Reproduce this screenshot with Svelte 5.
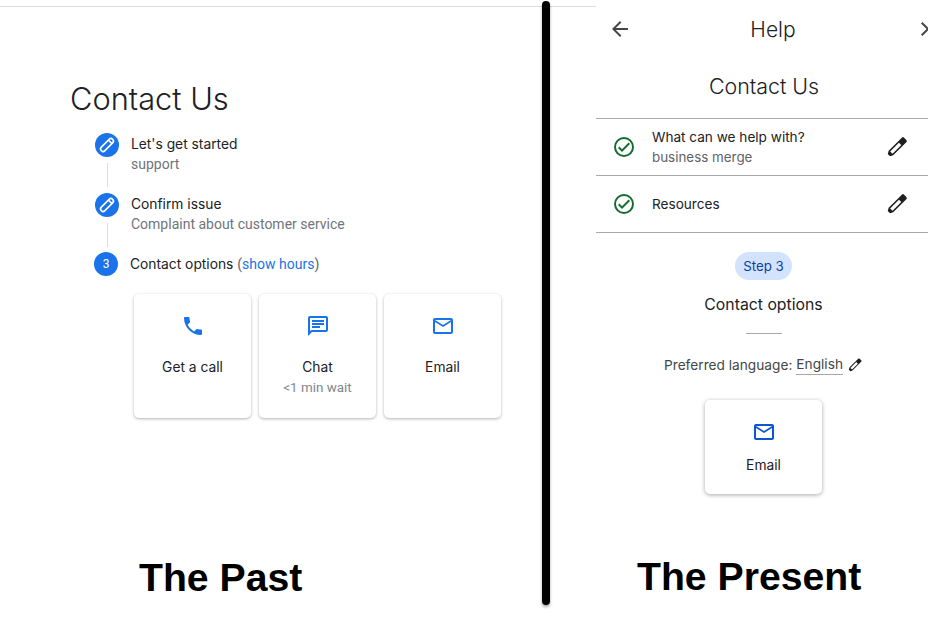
<script>
    const pen = "M8.8 2a1.6 1.6 0 0 1 1.6-1.6h3.2a1.6 1.6 0 0 1 1.6 1.6v18.6l-1.6 2.9h-3.2l-1.6-2.9zM10.3 7.6v12.4h3.4V7.6z"
    const mail = "M20 4H4c-1.1 0-2 .9-2 2v12c0 1.1.9 2 2 2h16c1.1 0 2-.9 2-2V6c0-1.1-.9-2-2-2zm0 14H4V8l8 5 8-5v10zm-8-7L4 6h16l-8 5z"
    const phone = "M6.62 10.79c1.44 2.83 3.76 5.14 6.59 6.59l2.2-2.2c.27-.27.67-.36 1.02-.24 1.12.37 2.33.57 3.57.57.55 0 1 .45 1 1V20c0 .55-.45 1-1 1-9.39 0-17-7.61-17-17 0-.55.45-1 1-1h3.5c.55 0 1 .45 1 1 0 1.25.2 2.45.57 3.57.11.35.03.74-.25 1.02l-2.2 2.2z"
    const chat = "M20 2H4c-1.1 0-2 .9-2 2v18l4-4h14c1.1 0 2-.9 2-2V4c0-1.1-.9-2-2-2zm0 14H5.17L4 17.17V4h16v12zM6 12h8v2H6zm0-3h12v2H6zm0-3h12v2H6z"
    const check = "M12 2a10 10 0 1 0 0 20 10 10 0 0 0 0-20zm0 18a8 8 0 1 1 0-16 8 8 0 0 1 0 16zm4.59-12.42L10 14.17l-2.59-2.58L6 13l4 4 8-8z"

    const doneSteps = [
        { title: "Let's get started", sub: "support" },
        { title: "Confirm issue", sub: "Complaint about customer service" }
    ]
    const pastOptions = [
        { icon: phone, label: "Get a call" },
        { icon: chat, label: "Chat", wait: "<1 min wait" },
        { icon: mail, label: "Email" }
    ]
    const answered = [
        { title: "What can we help with?", sub: "business merge" },
        { title: "Resources" }
    ]
</script>

<div class="page">
    <section class="past">
        <h1>Contact Us</h1>
        <div class="steps">
            {#each doneSteps as step}
                <div class="step">
                    <div class="marker">
                        <span class="dot">
                            <svg viewBox="0 0 24 24" width="24" height="24">
                                <g transform="rotate(45 12 12)" fill="none" stroke="#fff" stroke-width="1.6">
                                    <rect x="9.5" y="4" width="5" height="16" rx="2.5"/>
                                    <path d="M9.5 7.5h5"/>
                                </g>
                            </svg>
                        </span>
                        <span class="line"></span>
                    </div>
                    <div class="step-text">
                        <div class="step-title">{step.title}</div>
                        <div class="step-sub">{step.sub}</div>
                    </div>
                </div>
            {/each}
            <div class="step current">
                <span class="dot num">3</span>
                <div class="step-title">Contact options <span class="hours">(<span class="link">show hours</span>)</span></div>
            </div>
        </div>
        <div class="options">
            {#each pastOptions as opt}
                <div class="card">
                    <svg viewBox="0 0 24 24" width="24" height="24"><path d={opt.icon} fill="#1a73e8"/></svg>
                    <div class="card-label">{opt.label}</div>
                    {#if opt.wait}<div class="card-wait">{opt.wait}</div>{/if}
                </div>
            {/each}
        </div>
        <div class="caption">The Past</div>
    </section>

    <section class="present">
        <header class="topbar">
            <svg viewBox="0 0 24 24" width="24" height="24"><path d="M20 11H7.83l5.59-5.59L12 4l-8 8 8 8 1.41-1.41L7.83 13H20v-2z" fill="#444746"/></svg>
            <span class="topbar-title">Help</span>
            <svg viewBox="0 0 24 24" width="24" height="24"><path d="M19 6.41 17.59 5 12 10.59 6.41 5 5 6.41 10.59 12 5 17.59 6.41 19 12 13.41 17.59 19 19 17.59 13.41 12z" fill="#444746"/></svg>
        </header>
        <h2>Contact Us</h2>
        <div class="answers">
            {#each answered as row}
                <div class="answer">
                    <svg viewBox="0 0 24 24" width="24" height="24"><path d={check} fill="#146c2e"/></svg>
                    <div class="answer-text">
                        <div class="answer-title">{row.title}</div>
                        {#if row.sub}<div class="answer-sub">{row.sub}</div>{/if}
                    </div>
                    <svg viewBox="0 0 24 24" width="24" height="24"><path d={pen} transform="rotate(45 12 12)" fill="#1f1f1f" fill-rule="evenodd"/></svg>
                </div>
            {/each}
        </div>
        <div class="current-step">
            <span class="chip">Step 3</span>
            <div class="current-title">Contact options</div>
            <span class="rule"></span>
            <div class="language">
                Preferred language: <span class="lang">English</span>
                <svg viewBox="0 0 24 24" width="16" height="16"><path d={pen} transform="rotate(45 12 12)" fill="#1f1f1f" fill-rule="evenodd"/></svg>
            </div>
            <div class="card small">
                <svg viewBox="0 0 24 24" width="24" height="24"><path d={mail} fill="#0b57d0"/></svg>
                <div class="card-label">Email</div>
            </div>
        </div>
        <div class="caption">The Present</div>
    </section>

    <div class="divider"></div>
</div>

<style>
    :global(body){
        margin: 0;
        background: #fff;
    }
    .page{
        position: relative;
        width: 928px;
        height: 619px;
        overflow: hidden;
        display: grid;
        grid-template-columns: 596px 332px;
        font-family: Roboto, sans-serif;
        color: #202124;
    }
    .divider{
        position: absolute;
        left: 542px;
        top: 1px;
        width: 8px;
        height: 604px;
        background: #000;
        border-radius: 4px;
        box-shadow: 0 2px 3px rgba(0, 0, 0, .35);
    }
    .past{
        margin-top: 6px;
        border-top: 1px solid #dadce0;
        padding: 72px 0 0 70px;
    }
    h1{
        margin: 0;
        font-family: Inter, sans-serif;
        font-weight: 300;
        font-size: 30.8px;
        line-height: 40px;
    }
    .steps{
        margin: 14px 0 0 25px;
    }
    .step{
        display: flex;
        gap: 12px;
        height: 60px;
    }
    .marker{
        display: flex;
        flex-direction: column;
        align-items: center;
    }
    .dot{
        width: 24px;
        height: 24px;
        flex: none;
        border-radius: 50%;
        background: #1a73e8;
        display: flex;
        align-items: center;
        justify-content: center;
    }
    .line{
        width: 1px;
        height: 24px;
        margin-top: 6px;
        background: #dadce0;
    }
    .step-text{
        padding-top: 1px;
    }
    .step-title{
        font-family: Inter, sans-serif;
        font-size: 13.8px;
        line-height: 20px;
        color: #202124;
    }
    .step-sub{
        font-size: 14px;
        line-height: 20px;
        color: #70757a;
    }
    .current{
        height: 24px;
        align-items: center;
        margin: -1px 0 0 -1px;
    }
    .num{
        color: #fff;
        font-size: 12px;
    }
    .hours{
        font-family: Roboto, sans-serif;
        font-size: 14px;
        color: #5f6368;
    }
    .link{
        color: #1a73e8;
    }
    .options{
        display: flex;
        gap: 8px;
        margin: 18px 0 0 64px;
    }
    .card{
        width: 117px;
        height: 124px;
        box-sizing: border-box;
        padding-top: 20px;
        background: #fff;
        border-radius: 5px;
        box-shadow: 0 1px 3px rgba(60, 64, 67, .4);
        display: flex;
        flex-direction: column;
        align-items: center;
    }
    .card svg{
        margin-bottom: 19px;
    }
    .card-label{
        font-family: Inter, sans-serif;
        font-size: 13.8px;
        line-height: 20px;
    }
    .card-wait{
        margin-top: 1px;
        font-size: 13.4px;
        line-height: 20px;
        color: #80868b;
    }
    .caption{
        font-family: "Liberation Sans", sans-serif;
        font-weight: 700;
        font-size: 39.2px;
        line-height: 50px;
        color: #000;
        white-space: nowrap;
    }
    .past .caption{
        margin: 135px 0 0 69px;
    }
    .present .caption{
        margin: 58px 0 0 41px;
    }
    .topbar{
        height: 58px;
        display: flex;
        align-items: center;
        justify-content: space-between;
        padding-left: 12px;
        margin-right: -12px;
    }
    .topbar-title{
        font-family: Inter, sans-serif;
        font-weight: 300;
        font-size: 21px;
        margin-right: 2px;
    }
    h2{
        margin: 0;
        text-align: center;
        font-family: Inter, sans-serif;
        font-weight: 300;
        font-size: 21.4px;
        line-height: 30px;
        height: 60px;
        padding-top: 13px;
        box-sizing: border-box;
        margin-right: -4px;
    }
    .answers{
        border-top: 1px solid #a8a8a8;
    }
    .answer{
        height: 56px;
        border-bottom: 1px solid #a8a8a8;
        display: flex;
        align-items: center;
        padding: 0 19px 0 16px;
    }
    .answer-text{
        flex: 1;
        margin-left: 16px;
    }
    .answer-title{
        font-family: Inter, sans-serif;
        font-size: 13.6px;
        line-height: 20px;
    }
    .answer-sub{
        font-family: Inter, sans-serif;
        font-size: 13.4px;
        line-height: 20px;
        color: #5f6368;
    }
    .current-step{
        display: flex;
        flex-direction: column;
        align-items: center;
        padding-top: 19px;
        margin-left: 3px;
    }
    .chip{
        width: 57px;
        height: 28px;
        line-height: 28px;
        text-align: center;
        border-radius: 14px;
        background: #d3e3fd;
        color: #0842a0;
        font-family: Inter, sans-serif;
        font-size: 13.3px;
    }
    .current-title{
        font-family: Inter, sans-serif;
        font-size: 15.8px;
        line-height: 24px;
        margin-top: 13px;
    }
    .rule{
        width: 36px;
        height: 1px;
        background: #a8a8a8;
        margin-top: 16px;
    }
    .language{
        display: flex;
        align-items: center;
        gap: 4px;
        margin-top: 20px;
        font-family: Inter, sans-serif;
        font-size: 13.7px;
        line-height: 20px;
        color: #444746;
        white-space: nowrap;
    }
    .lang{
        border-bottom: 1px solid #a8a8a8;
    }
    .card.small{
        width: 117px;
        height: 94px;
        margin-top: 25px;
        padding-top: 20px;
        box-shadow: 0 1px 4px rgba(60, 64, 67, .45);
    }
    .card.small svg{
        margin-bottom: 11px;
    }
</style>
